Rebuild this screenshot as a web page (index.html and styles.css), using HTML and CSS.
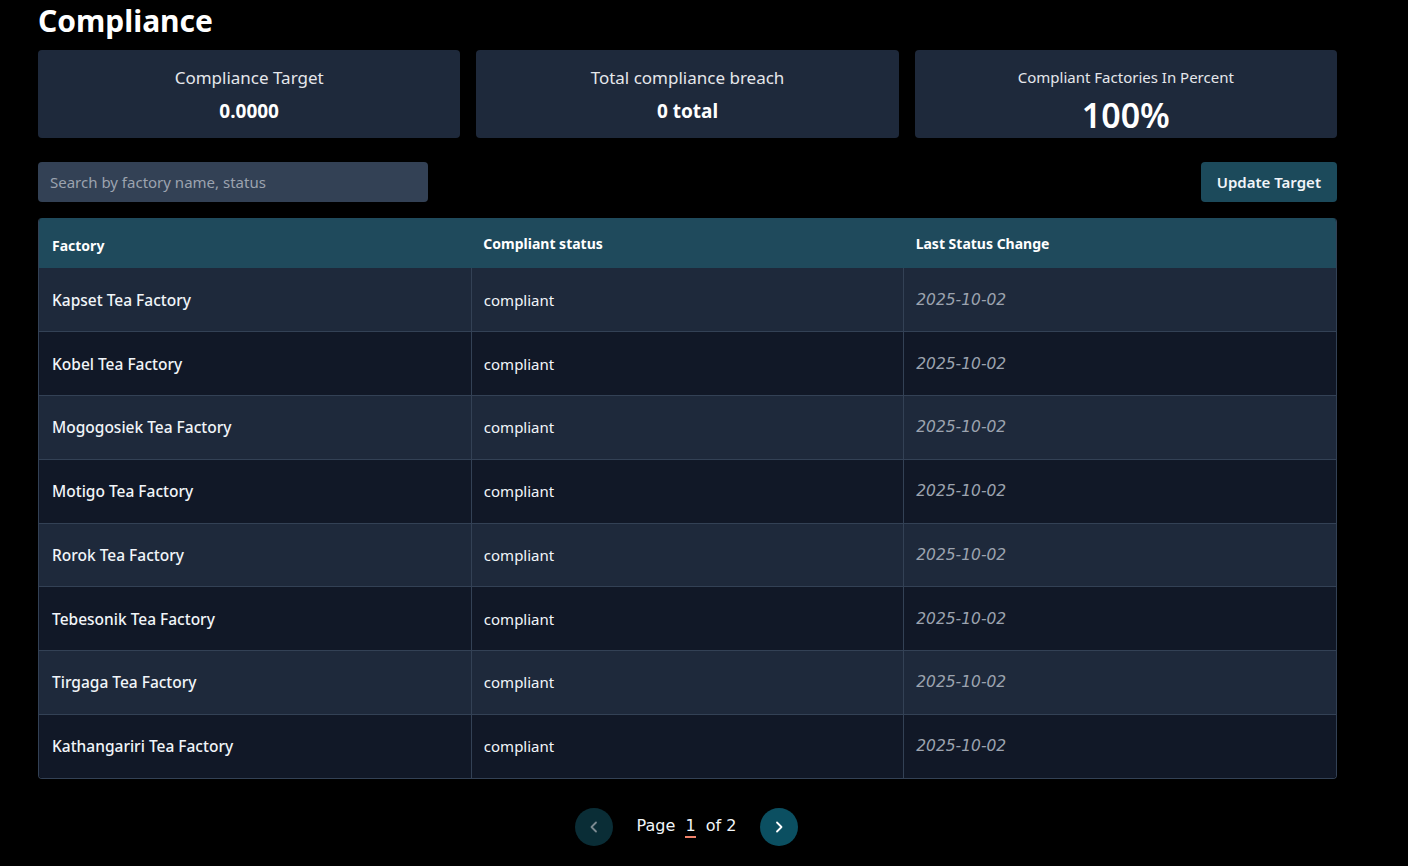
FILE: index.html
```html
<!DOCTYPE html>
<html>
<head>
<meta charset="utf-8">
<link rel="stylesheet" href="styles.css">
</head>
<body>
<div class="page">
  <h1 class="title">Compliance</h1>
  <div class="cards">
    <div class="card">
      <div class="card-label">Compliance Target</div>
      <div class="card-value">0.0000</div>
    </div>
    <div class="card">
      <div class="card-label">Total compliance breach</div>
      <div class="card-value">0 total</div>
    </div>
    <div class="card">
      <div class="card-label small">Compliant Factories In Percent</div>
      <div class="card-value big">100%</div>
    </div>
  </div>
  <div class="toolbar">
    <input class="search" type="text" placeholder="Search by factory name, status">
    <button class="btn">Update Target</button>
  </div>
  <div class="table-wrap">
    <table class="table">
      <thead>
        <tr><th class="th-first">Factory</th><th>Compliant status</th><th>Last Status Change</th></tr>
      </thead>
      <tbody>
        <tr><td class="name">Kapset Tea Factory</td><td>compliant</td><td class="date">2025-10-02</td></tr>
        <tr><td class="name">Kobel Tea Factory</td><td>compliant</td><td class="date">2025-10-02</td></tr>
        <tr><td class="name">Mogogosiek Tea Factory</td><td>compliant</td><td class="date">2025-10-02</td></tr>
        <tr><td class="name">Motigo Tea Factory</td><td>compliant</td><td class="date">2025-10-02</td></tr>
        <tr><td class="name">Rorok Tea Factory</td><td>compliant</td><td class="date">2025-10-02</td></tr>
        <tr><td class="name">Tebesonik Tea Factory</td><td>compliant</td><td class="date">2025-10-02</td></tr>
        <tr><td class="name">Tirgaga Tea Factory</td><td>compliant</td><td class="date">2025-10-02</td></tr>
        <tr><td class="name">Kathangariri Tea Factory</td><td>compliant</td><td class="date">2025-10-02</td></tr>
      </tbody>
    </table>
  </div>
  <div class="pager">
    <button class="circle prev" aria-label="Previous">
      <svg width="14" height="14" viewBox="0 0 14 14"><path d="M9 2.5 L4.5 7 L9 11.5" fill="none" stroke="#7c8a91" stroke-width="1.8" stroke-linecap="round" stroke-linejoin="round"/></svg>
    </button>
    <div class="pager-text">Page <span class="cur">1</span> of 2</div>
    <button class="circle next" aria-label="Next">
      <svg width="14" height="14" viewBox="0 0 14 14"><path d="M5 2.5 L9.5 7 L5 11.5" fill="none" stroke="#ffffff" stroke-width="1.8" stroke-linecap="round" stroke-linejoin="round"/></svg>
    </button>
  </div>
</div>
</body>
</html>
```
FILE: styles.css
```css
* { box-sizing: border-box; }
html, body { margin: 0; padding: 0; background: #000; }
body { font-family: "Noto Sans", "Open Sans", sans-serif; color: #f1f5f9; }
.page { width: 1299px; margin-left: 38px; }
.title { margin: 0; padding-top: 0; font-size: 30px; font-weight: 700; line-height: 42px; color: #fff; height: 50px; }
.cards { display: grid; grid-template-columns: repeat(3, 1fr); gap: 16px; }
.card { background: #1e293b; border-radius: 4px; height: 88px; display: flex; flex-direction: column; align-items: center; padding-top: 16px; }
.card-label { font-size: 17px; line-height: 24px; color: #e5e7eb; }
.card-label.small { font-size: 15px; line-height: 22px; }
.card-value { font-size: 19px; font-weight: 700; line-height: 26px; color: #fff; margin-top: 8px; }
.card-value.big { font-size: 34px; line-height: 40px; font-weight: 600; margin-top: 7px; }
.toolbar { display: flex; justify-content: space-between; align-items: center; margin-top: 24px; }
.search { width: 390px; height: 40px; border: none; border-radius: 4px; background: #334155; padding: 0 12px; font-family: inherit; font-size: 15px; color: #e5e7eb; outline: none; }
.search::placeholder { color: #9ca3af; }
.btn { height: 40px; padding: 0 16px; border: none; border-radius: 4px; background: #1c4a5b; color: #f1f5f9; font-family: inherit; font-size: 15px; font-weight: 600; }
.table-wrap { margin-top: 16px; border: 1px solid #334155; border-top: none; border-radius: 4px; overflow: hidden; }
.table { width: 100%; border-collapse: collapse; table-layout: fixed; }
.table th { background: #1f4a5c; height: 50px; text-align: left; padding: 0 12px; font-size: 14px; font-weight: 700; color: #fff; }
.table th.th-first { padding-top: 4px; padding-left: 13px; }
.table td { height: 63.75px; padding: 0 12px; font-size: 15px; border-right: 1px solid #334155; border-bottom: 1px solid #334155; color: #f1f5f9; }
.table td:last-child { border-right: none; }
.table tbody tr:last-child td { border-bottom: none; }
.table tbody tr:nth-child(odd) td { background: #1e293b; }
.table tbody tr:nth-child(even) td { background: #111827; }
.table td.name { font-weight: 500; font-size: 15.5px; padding-left: 13px; }
.table td.date { font-family: "DejaVu Sans", Verdana, sans-serif; font-style: italic; font-size: 15.5px; color: #9ca3af; }
.pager { display: flex; justify-content: center; align-items: center; gap: 24px; margin-top: 29px; padding-right: 2px; }
.circle { width: 38px; height: 38px; border-radius: 50%; border: none; display: flex; align-items: center; justify-content: center; padding: 0; }
.circle.prev { background: #0a2d36; }
.circle.next { background: #0b4f61; }
.pager-text { font-family: "DejaVu Sans", Verdana, sans-serif; font-size: 16px; color: #f1f5f9; }
.cur { display: inline-block; margin: 0 5px; border-bottom: 2px solid #f0826a; line-height: 20px; }
```
